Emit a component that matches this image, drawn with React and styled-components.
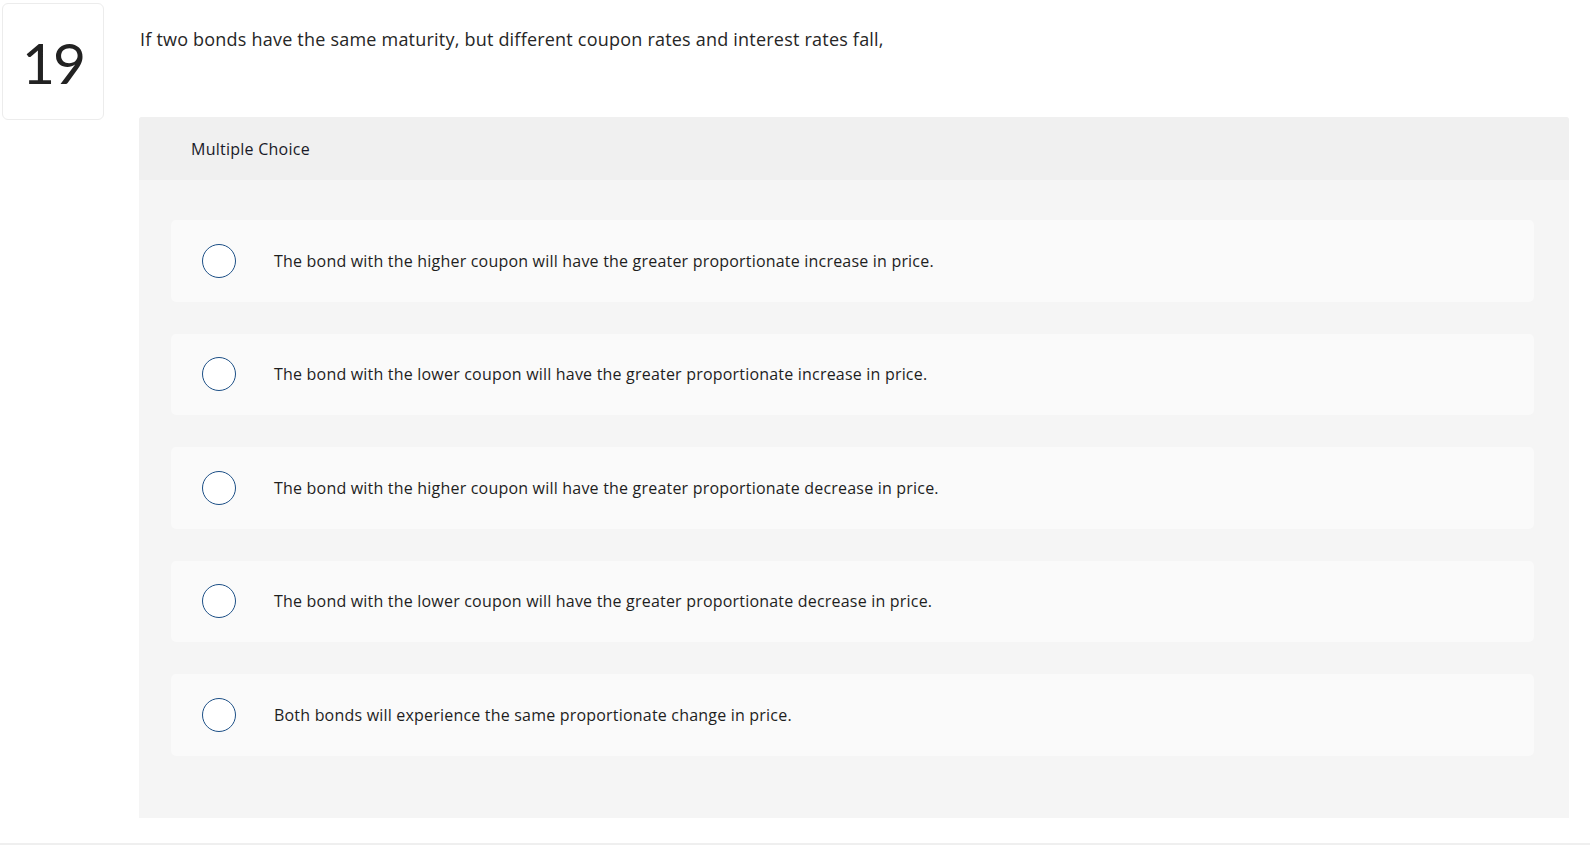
import React from "react";
import styled, { createGlobalStyle } from "styled-components";

const Global = createGlobalStyle`
  html, body { margin: 0; padding: 0; background: #ffffff; }
  body { font-family: "Open Sans", Lato, Arial, sans-serif; color: #222; }
`;

const Question = styled.section`
  display: flex;
  align-items: flex-start;
  gap: 35px;
  padding: 3px 21px 25px 2px;
  border-bottom: 2px solid #efefef;
`;

const NumberBox = styled.div`
  flex: 0 0 auto;
  width: 100px;
  height: 115px;
  border: 1px solid #ececec;
  border-radius: 6px;
  display: flex;
  align-items: center;
  justify-content: center;
  font-family: Lato, "Open Sans", Arial, sans-serif;
  font-size: 57px;
  font-weight: 400;
  color: #222;
  letter-spacing: -2px;
`;

const Body = styled.div`
  flex: 1 1 auto;
  display: flex;
  flex-direction: column;
`;

const Prompt = styled.p`
  margin: 0;
  padding: 23px 0 0 1px;
  height: 114px;
  box-sizing: border-box;
  font-size: 18px;
  line-height: 26px;
  letter-spacing: 0.21px;
  color: #262626;
`;

const Panel = styled.div`
  background: #f5f5f5;
  border-radius: 3px 3px 0 0;
`;

const PanelHeader = styled.div`
  height: 63px;
  background: #f0f0f0;
  border-radius: 3px 3px 0 0;
  display: flex;
  align-items: center;
  padding-left: 52px;
  font-size: 16px;
  letter-spacing: 0.25px;
  color: #1a1a28;
`;

const Choices = styled.div`
  display: flex;
  flex-direction: column;
  gap: 32px;
  padding: 40px 35px 62px 32px;
`;

const Choice = styled.label`
  height: 81.5px;
  background: #fafafa;
  border-radius: 5px;
  display: flex;
  align-items: center;
  padding-left: 31px;
  gap: 38px;
  font-size: 16px;
  letter-spacing: 0.2px;
  color: #1e1e1e;
  cursor: pointer;
`;

const Radio = styled.span`
  flex: 0 0 auto;
  width: 32px;
  height: 32px;
  border-radius: 50%;
  border: 1.6px solid #1c4f86;
  background: #ffffff;
`;

const choices = [
  "The bond with the higher coupon will have the greater proportionate increase in price.",
  "The bond with the lower coupon will have the greater proportionate increase in price.",
  "The bond with the higher coupon will have the greater proportionate decrease in price.",
  "The bond with the lower coupon will have the greater proportionate decrease in price.",
  "Both bonds will experience the same proportionate change in price.",
];

export default function App() {
  return (
    <>
      <Global />
      <Question>
        <NumberBox>19</NumberBox>
        <Body>
          <Prompt>
            If two bonds have the same maturity, but different coupon rates and interest rates fall,
          </Prompt>
          <Panel>
            <PanelHeader>Multiple Choice</PanelHeader>
            <Choices>
              {choices.map((c) => (
                <Choice key={c}>
                  <Radio />
                  <span>{c}</span>
                </Choice>
              ))}
            </Choices>
          </Panel>
        </Body>
      </Question>
    </>
  );
}
